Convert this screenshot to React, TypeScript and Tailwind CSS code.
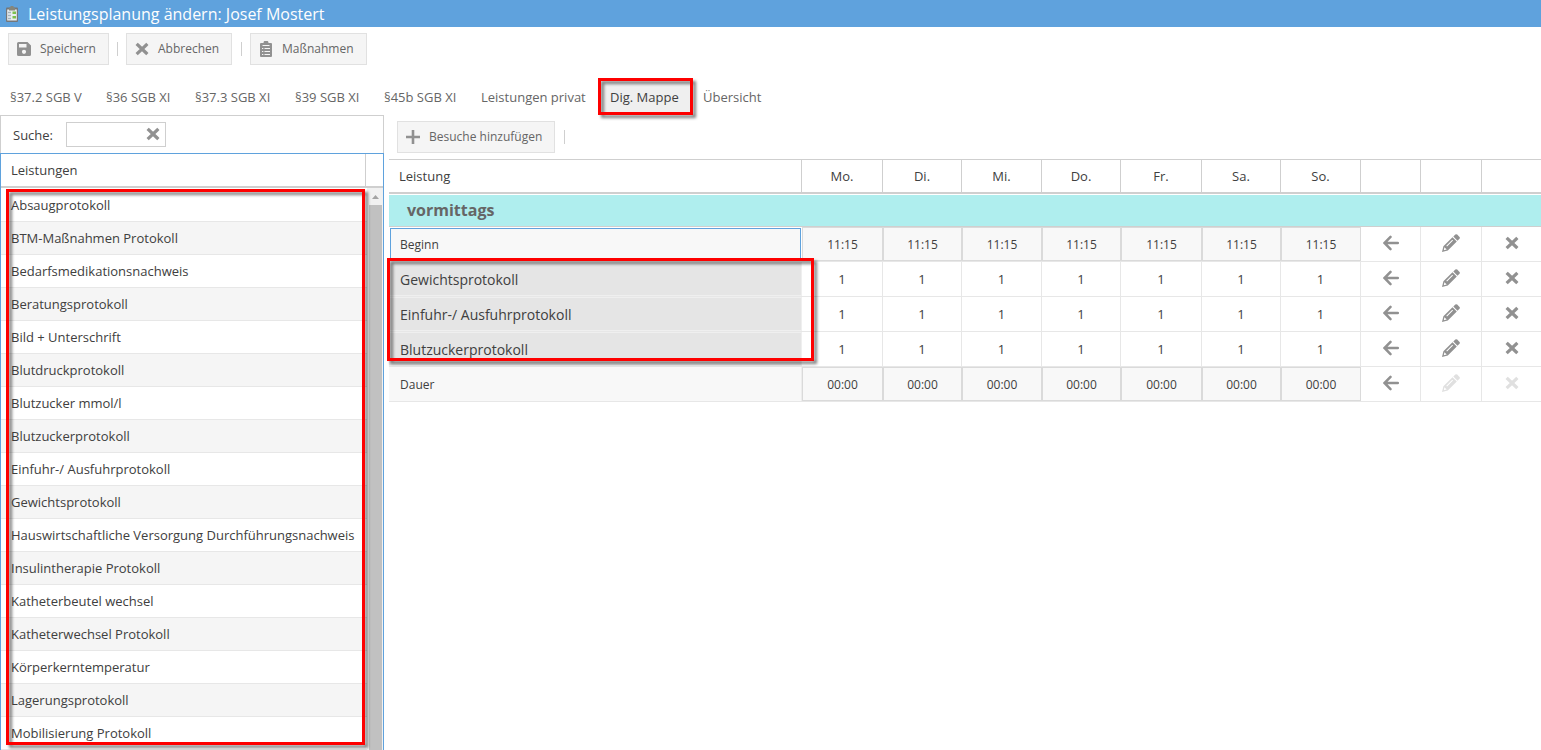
import React from "react";

const services = [
  "Absaugprotokoll",
  "BTM-Maßnahmen Protokoll",
  "Bedarfsmedikationsnachweis",
  "Beratungsprotokoll",
  "Bild + Unterschrift",
  "Blutdruckprotokoll",
  "Blutzucker mmol/l",
  "Blutzuckerprotokoll",
  "Einfuhr-/ Ausfuhrprotokoll",
  "Gewichtsprotokoll",
  "Hauswirtschaftliche Versorgung Durchführungsnachweis",
  "Insulintherapie Protokoll",
  "Katheterbeutel wechsel",
  "Katheterwechsel Protokoll",
  "Körperkerntemperatur",
  "Lagerungsprotokoll",
  "Mobilisierung Protokoll",
];

const tabs = [
  { label: "§37.2 SGB V", width: "w-[96px]" },
  { label: "§36 SGB XI", width: "w-[89px]" },
  { label: "§37.3 SGB XI", width: "w-[100px]" },
  { label: "§39 SGB XI", width: "w-[89px]" },
  { label: "§45b SGB XI", width: "w-[97px]" },
  { label: "Leistungen privat", width: "w-[118px]" },
  { label: "Dig. Mappe", width: "w-[91px]", active: true },
  { label: "Übersicht", width: "w-[90px]" },
];

const days = ["Mo.", "Di.", "Mi.", "Do.", "Fr.", "Sa.", "So."];

const rows = [
  { label: "Beginn", value: "11:15", kind: "time", selected: true },
  { label: "Gewichtsprotokoll", value: "1", kind: "count" },
  { label: "Einfuhr-/ Ausfuhrprotokoll", value: "1", kind: "count" },
  { label: "Blutzuckerprotokoll", value: "1", kind: "count" },
  { label: "Dauer", value: "00:00", kind: "time", locked: true },
];

const gridCols =
  "grid grid-cols-[413px_81px_79px_80px_79px_81px_79px_80px_60px_61px_60px]";

function CrossIcon() {
  return (
    <svg viewBox="0 0 14 14" className="size-[14px]">
      <path d="M2.8 3 11.2 11M11.2 3 2.8 11" stroke="currentColor" strokeWidth="3.2" strokeLinecap="square" />
    </svg>
  );
}

function ArrowIcon() {
  return (
    <svg viewBox="0 0 16 16" className="size-4" fill="none" stroke="currentColor" strokeWidth="2.5" strokeLinecap="round">
      <path d="M14.8 8H2M7.500 1.900 1.500 8l6 6.100" />
    </svg>
  );
}

function PencilIcon() {
  return (
    <svg viewBox="0 0 18 18" className="size-[18px]" fill="currentColor">
      <path d="M13.3 0.6a1.400 1.400 0 0 1 1.900 0l2.300 2.300a1.400 1.400 0 0 1 0 1.900l-2 2-4.200-4.200z" />
      <path
        fillRule="evenodd"
        d="M10.500 3.300l4.300 4.300-9 9L0 18l1.400-5.800zM2.400 13.300l-.6 2.900 2.900-.6zM10.300 5.700l-6 6 .7.700 6-6z"
      />
    </svg>
  );
}

function SaveIcon() {
  return (
    <svg viewBox="0 0 14 14" className="size-[14px]" fill="currentColor">
      <path
        fillRule="evenodd"
        d="M1.500 0h9L14 3.500v9a1.500 1.500 0 0 1-1.500 1.500h-11A1.500 1.500 0 0 1 0 12.500v-11A1.500 1.500 0 0 1 1.500 0zM2 2v3.500h7.500V2zM7 7.700a2.100 2.100 0 1 0 0 4.200 2.100 2.100 0 0 0 0-4.200z"
      />
    </svg>
  );
}

function ClipboardIcon() {
  return (
    <svg viewBox="0 0 14 16" className="h-4 w-[14px]" fill="none">
      <path d="M2 2h2.500a2.500 2.500 0 0 1 5 0H12a1 1 0 0 1 1 1v12a1 1 0 0 1-1 1H2a1 1 0 0 1-1-1V3a1 1 0 0 1 1-1z" fill="currentColor" />
      <path d="M3.500 4.500h7M3 7.500h1.300M5.500 7.500H11M3 10.500h1.300M5.500 10.500H11M3 13.500h1.300M5.500 13.500H11" stroke="#f5f5f5" />
    </svg>
  );
}

function PlanIcon() {
  return (
    <svg viewBox="0 0 14 16" className="h-4 w-[14px]">
      <rect x="1" y="1.500" width="12" height="14.500" rx="1" fill="#74777a" />
      <rect x="2.200" y="3.500" width="9.600" height="11" fill="#e9eef0" />
      <path d="M4 1.500h1.500V0h3v1.500H10V4.500H4z" fill="#85867b" />
      <path d="M3 6.500h3M3 9.500h3M3 12.500h3" stroke="#a5b2bb" strokeWidth="1.500" />
      <path d="M7.500 5.500h3.500V8H7.500zM7.500 10H11v2.500H7.500z" fill="#7cbf4e" />
    </svg>
  );
}

function ToolButton({ icon, label, className }: { icon: React.ReactNode; label: string; className: string }) {
  return (
    <button
      className={`flex h-8 shrink-0 items-center border border-[#e1e1e1] bg-[#f5f5f5] pl-2 text-[12px] text-[#666] ${className}`}
    >
      <span className="flex w-[14px] justify-center text-[#919191]">{icon}</span>
      <span className="ml-[9px] whitespace-nowrap">{label}</span>
    </button>
  );
}

function Highlight({ className }: { className: string }) {
  return (
    <div
      className={`pointer-events-none absolute z-10 border-[3px] border-[#fe0000] drop-shadow-[3px_3px_1.5px_rgba(0,0,0,0.5)] ${className}`}
    />
  );
}

function ServiceList() {
  return (
    <aside className="flex w-[384px] shrink-0 flex-col overflow-hidden">
      <div className="flex h-[38px] shrink-0 items-center border border-b-0 border-[#cfcfcf] pl-3">
        <span className="w-[53px] pt-[2px]">Suche:</span>
        <div className="flex h-[25px] w-[100px] items-center justify-end border border-[#cfcfcf] pr-[5px] pb-px text-[#919191]">
          <CrossIcon />
        </div>
      </div>
      <div className="flex min-h-0 grow flex-col border border-b-0 border-[#5fa2dd]">
        <div className="flex h-[34px] shrink-0 border-b-2 border-[#cfcfcf]">
          <div className="flex w-[365px] items-center border-r border-[#cfcfcf] pt-[2px] pl-[10px]">Leistungen</div>
        </div>
        <div className="flex min-h-0 grow">
          <ul className="w-[366px] pt-px">
            {services.map((name, i) => (
              <li
                key={name}
                className={`flex h-[33px] items-center border-b border-[#e7e7e7] pt-[2px] pl-[10px] whitespace-nowrap ${i % 2 ? "bg-[#f5f5f5]" : "bg-white"}`}
              >
                {name}
              </li>
            ))}
          </ul>
          <div className="flex w-4 flex-col items-center bg-[#f1f1f1]">
            <svg viewBox="0 0 17 17" className="size-[17px] shrink-0">
              <path d="M5 11 8.500 7l3.500 4z" fill="#a3a3a3" />
            </svg>
            <div className="w-[13px] grow bg-[#c1c1c1]" />
          </div>
        </div>
      </div>
    </aside>
  );
}

function Schedule() {
  return (
    <main className="ml-[5px] min-w-0 grow overflow-hidden">
      <div className="flex h-[44px] items-center pl-2">
        <ToolButton
          className="w-[158px]"
          label="Besuche hinzufügen"
          icon={
            <svg viewBox="0 0 14 14" className="size-[14px] shrink-0">
              <path d="M7 0v14M0 7h14" stroke="currentColor" strokeWidth="2.600" />
            </svg>
          }
        />
        <span className="ml-[9px] h-[14px] w-px bg-[#cfcfcf]" />
      </div>
      <div className={`${gridCols} h-[35px] border-t border-b-2 border-[#cfcfcf]`}>
        <div className="flex items-center border-r border-[#cfcfcf] pt-[2px] pl-[10px]">Leistung</div>
        {days.map((d) => (
          <div key={d} className="flex items-center justify-center border-r border-[#cfcfcf] pt-[2px]">
            {d}
          </div>
        ))}
        <div className="border-r border-[#cfcfcf]" />
        <div className="border-r border-[#cfcfcf]" />
        <div />
      </div>
      <div className="mt-px flex h-8 items-center border-b border-[#cfcfcf] bg-[#afeeee] pb-[2px] pl-[18px] text-[16px] font-bold text-[#666]">
        vormittags
      </div>
      {rows.map((row) => (
        <div key={row.label} className={`${gridCols} h-[35px] border-b border-[#e7e7e7]`}>
          {row.kind === "count" ? (
            <div className="flex items-center border-y border-r border-[#efefef] bg-[#e5e5e5] pl-[11px] text-[14px]">
              {row.label}
            </div>
          ) : row.selected ? (
            <div className="mt-px mr-px ml-px flex items-center border border-b-0 border-[#5fa2dd] bg-[#f8f8f8] pl-[9px] text-[12px]">
              {row.label}
            </div>
          ) : (
            <div className="flex items-center border-r border-[#ededed] bg-[#f8f8f8] pt-[2px] pl-[11px] text-[12px]">
              {row.label}
            </div>
          )}
          {days.map((d) =>
            row.kind === "time" ? (
              <div key={d} className="border-r border-[#dadada]">
                <div className="flex h-full items-center justify-center border border-r-0 border-[#dadada] bg-[#f8f8f8] pt-[2px] text-[12px]">
                  {row.value}
                </div>
              </div>
            ) : (
              <div key={d} className="flex items-center justify-center border-r border-[#e7e7e7] pt-[2px]">
                {row.value}
              </div>
            )
          )}
          <div className="flex items-center justify-center border-r border-[#e7e7e7] pb-[2px] text-[#919191]">
            <ArrowIcon />
          </div>
          <div className={`flex items-center justify-center border-r border-[#e7e7e7] pb-[2px] ${row.locked ? "text-[#e0e0e0]" : "text-[#919191]"}`}>
            <PencilIcon />
          </div>
          <div className={`flex items-center justify-center pb-[2px] ${row.locked ? "text-[#e0e0e0]" : "text-[#919191]"}`}>
            <CrossIcon />
          </div>
        </div>
      ))}
    </main>
  );
}

export default function App() {
  return (
    <div className="relative flex h-[750px] w-[1541px] flex-col overflow-hidden bg-white font-['Open_Sans',sans-serif] text-[13px] text-[#404040]">
      <header className="flex h-[27px] shrink-0 items-center bg-[#5fa2dd] pl-[5px] text-[16px] text-[#fefefe]">
        <PlanIcon />
        <h1 className="ml-[9px]">Leistungsplanung ändern: Josef Mostert</h1>
      </header>
      <div className="flex h-[44px] shrink-0 items-center pl-2">
        <ToolButton className="w-[101px]" label="Speichern" icon={<SaveIcon />} />
        <span className="mx-2 h-[14px] w-px bg-[#cfcfcf]" />
        <ToolButton className="w-[106px]" label="Abbrechen" icon={<CrossIcon />} />
        <span className="mr-2 ml-[9px] h-[14px] w-px bg-[#cfcfcf]" />
        <ToolButton className="w-[117px]" label="Maßnahmen" icon={<ClipboardIcon />} />
      </div>
      <nav className="flex h-[44px] shrink-0 items-end pb-px pl-[10px]">
        {tabs.map((t) => (
          <div
            key={t.label}
            className={`flex h-[33px] shrink-0 items-center whitespace-nowrap ${t.width} ${
              t.active ? "mr-[13px] bg-[#efefef] pl-[11px] text-[#404040]" : "text-[#666]"
            }`}
          >
            {t.label}
          </div>
        ))}
      </nav>
      <div className="flex min-h-0 grow">
        <ServiceList />
        <Schedule />
      </div>
      <Highlight className="top-[78px] left-[598px] h-[37px] w-[95px]" />
      <Highlight className="top-[189px] left-[6px] h-[556px] w-[359px]" />
      <Highlight className="top-[258px] left-[387px] h-[103px] w-[427px]" />
    </div>
  );
}
